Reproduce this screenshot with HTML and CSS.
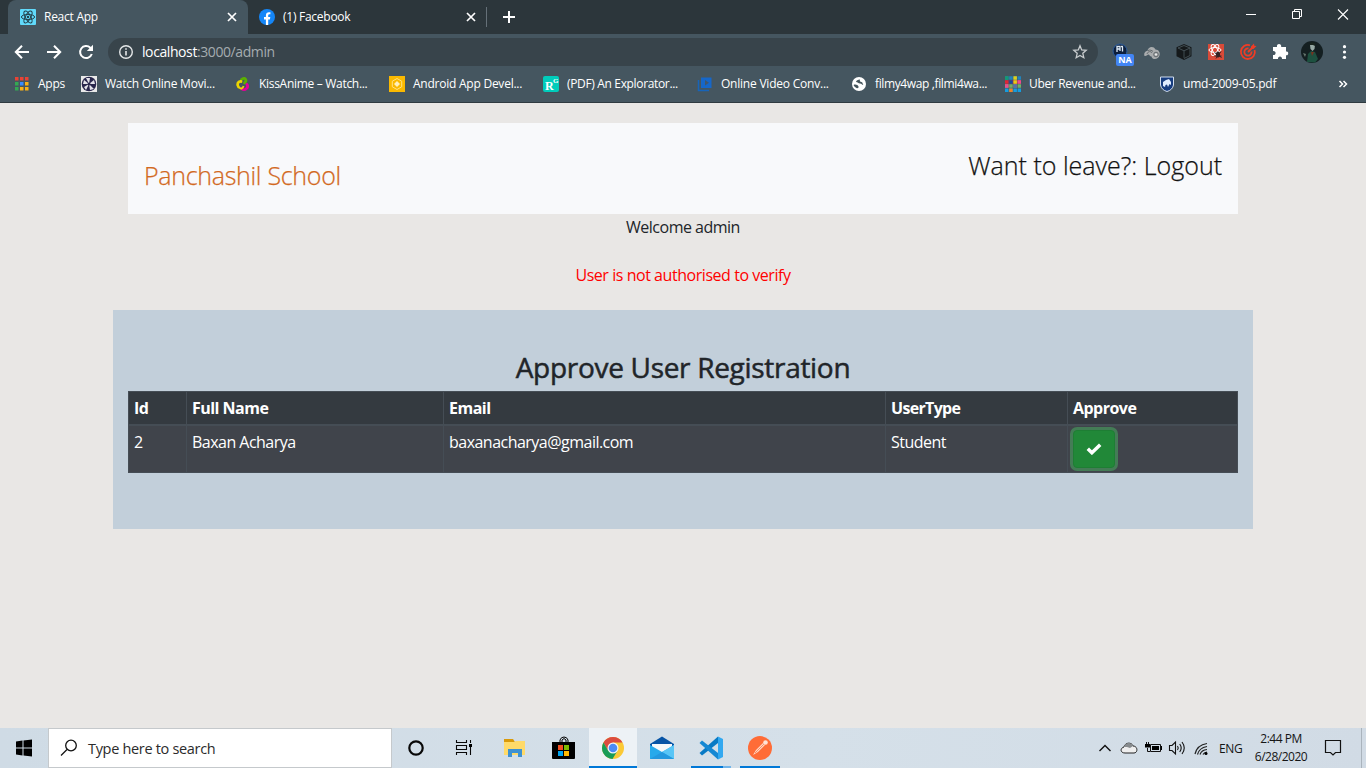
FILE: index.html
```html
<!DOCTYPE html>
<html lang="en">
<head>
<meta charset="utf-8">
<title>React App</title>
<link rel="stylesheet" href="styles.css">
</head>
<body>
<div class="screen">
  <header class="tabstrip">
    <div class="tab active">
      <svg class="i16" viewBox="0 0 16 16"><rect width="16" height="16" rx="1" fill="#61dafb"/><g fill="none" stroke="#24404b"><ellipse cx="8" cy="8" rx="6.6" ry="2.6"/><ellipse cx="8" cy="8" rx="6.6" ry="2.6" transform="rotate(60 8 8)"/><ellipse cx="8" cy="8" rx="6.6" ry="2.6" transform="rotate(120 8 8)"/></g><circle cx="8" cy="8" r="1.2" fill="#24404b"/></svg>
      <span class="tab-title t-react">React App</span>
      <svg class="close" viewBox="0 0 10 10"><path d="M1 1l8 8M9 1L1 9" stroke="#fff" stroke-width="1.7"/></svg>
    </div>
    <div class="tab second">
      <svg class="i16" viewBox="0 0 16 16"><circle cx="8" cy="8" r="8" fill="#1486f8"/><path d="M6.9 16v-5.6H5V8h1.9V6.4c0-2.1 1.2-3.2 3-3.2l1.5.1v2h-.9c-1 0-1.3.6-1.3 1.2V8h2.1l-.4 2.4H9.2V16z" fill="#fff"/></svg>
      <span class="tab-title t-fb">(1) Facebook</span>
      <svg class="close" viewBox="0 0 10 10"><path d="M1 1l8 8M9 1L1 9" stroke="#fff" stroke-width="1.7"/></svg>
    </div>
    <svg class="plus" viewBox="0 0 12 12"><path d="M6 0v12M0 6h12" stroke="#fff" stroke-width="2"/></svg>
    <div class="window-controls">
      <svg viewBox="0 0 46 28"><path d="M18 14.5h10" stroke="#fff"/></svg>
      <svg viewBox="0 0 46 28"><path d="M18.5 11.5h7v7h-7zM20.5 11.5v-2h7v7h-2" fill="none" stroke="#fff"/></svg>
      <svg viewBox="0 0 46 28"><path d="M18 9.5l10 10M28 9.5l-10 10" stroke="#fff" stroke-width="1.1"/></svg>
    </div>
  </header>

  <div class="toolbar">
    <svg class="nav" viewBox="0 0 16 16"><path d="M15 8H2M8 1.8L1.8 8 8 14.2" fill="none" stroke="#fff" stroke-width="2"/></svg>
    <svg class="nav" viewBox="0 0 16 16"><path d="M1 8h13M8 1.8L14.2 8 8 14.2" fill="none" stroke="#fff" stroke-width="2"/></svg>
    <svg class="nav" viewBox="0 0 16 16"><path d="M13.8 10A6 6 0 1 1 12.3 3.7L14 5.4" fill="none" stroke="#fff" stroke-width="2"/><path d="M15 .8V7H8.8z" fill="#fff"/></svg>
    <div class="omnibox">
      <svg class="i16" viewBox="0 0 16 16"><circle cx="8" cy="8" r="6.3" fill="none" stroke="#e4e7e8" stroke-width="1.4"/><path d="M8 7v4.5M8 4.2v1.6" stroke="#e4e7e8" stroke-width="1.6"/></svg>
      <span class="url"><b>localhost</b>:3000/admin</span>
      <svg class="star" viewBox="0 0 16 16"><path d="M8 1.800l1.700 4.100 4.500.4-3.400 3 1 4.400L8 11.400l-3.800 2.300 1-4.400-3.400-3 4.500-.4z" fill="none" stroke="#c9cdcf" stroke-width="1.3"/></svg>
    </div>
    <div class="extensions">
      <span class="ext na-ext">
        <svg class="i16" viewBox="0 0 16 16"><circle cx="8" cy="8" r="7" fill="#0d1f3c" stroke="#2b5c9c"/><path d="M5 9V3.500h3V8M5 6h3M10.500 3.500v5M9 3.500h2" fill="none" stroke="#dce9f5" stroke-width="1.300"/></svg>
        <span class="na">NA</span>
      </span>
      <svg class="ext" viewBox="0 0 32 32"><path d="M8.500 20c-1-3 1-5 3-5 0-4 6-6 8-1.500 3 0 5 3 4 6-1 4-7 5-8 1-2 0-2-2-3-2s-2 2-4 1.500z" fill="#a9acae"/><g fill="none" stroke="#62696d" stroke-width="1"><circle cx="20" cy="18.500" r="2.300"/><path d="M11 18c1-3 4-3 5-1M12 14.500c2-1 4 0 5 1"/></g><circle cx="20" cy="18.500" r="1" fill="#eee"/></svg>
      <svg class="ext" viewBox="0 0 32 32"><path d="M16 8l7.5 3.200v9L16 24l-7.500-3.800v-9z" fill="#15191b"/><path d="M10 12l6 2.800v7M22 12l-6 2.800M10 12l6-2.500 6 2.500v7.500l-6 3" fill="none" stroke="#4d5a61" stroke-width=".8"/></svg>
      <svg class="ext" viewBox="0 0 32 32"><path d="M8 8h16v16H8z" fill="#d94a38"/><g fill="none" stroke="#fff"><ellipse cx="15" cy="14" rx="6" ry="2.500"/><ellipse cx="15" cy="14" rx="6" ry="2.500" transform="rotate(60 15 14)"/><ellipse cx="15" cy="14" rx="6" ry="2.500" transform="rotate(120 15 14)"/></g><ellipse cx="18" cy="18.500" rx="2" ry="3" fill="#332022"/><path d="M14.500 16.500l7 5M21 15.500l-5 7M14.500 20h7" stroke="#332022"/></svg>
      <svg class="ext" viewBox="0 0 32 32"><g fill="none" stroke="#f03c24" stroke-width="1.800"><path d="M18 9.300A7 7 0 1 0 22.600 14"/><path d="M16.500 12.500a3.600 3.600 0 1 0 3 3M16 16l4.500-4.500"/></g><path d="M19 10.500L22 7.500l.3 2.200 2.200.3-3 2.900h-2.500z" fill="#f03c24"/></svg>
      <svg class="ext" viewBox="0 0 32 32"><path d="M9 11h4c-1-4 5-4 4.200 0H22v4.500c3-1 3 4.500 0 3.700V23h-4c.5-3.500-4.500-3.500-4 0H9v-4c3.500.5 3.500-4.500 0-4z" fill="#fff"/></svg>
      <svg class="ext" viewBox="0 0 32 32"><circle cx="16" cy="16" r="11" fill="#141f21"/><path d="M11 26l1-8 3-3 4 1 3 7-3 3.500z" fill="#1d5140"/><path d="M14 9l2-2 3 2-.5 4-2 2-2-2z" fill="#97a9a4"/><path d="M13 9l2-3 4 1v3l-2-1z" fill="#19241e"/><path d="M15 16l1 4 2-4z" fill="#78311f"/><path d="M7 17l3 1-1 3z" fill="#66776f"/></svg>
      <svg class="ext" viewBox="0 0 32 32"><g fill="#fff"><circle cx="16.500" cy="10.700" r="1.600"/><circle cx="16.500" cy="16" r="1.600"/><circle cx="16.500" cy="21.300" r="1.600"/></g></svg>
    </div>
  </div>

  <nav class="bookmarks">
    <div class="bm apps"><svg class="i16" viewBox="0 0 16 16"><path d="M1 1h3.500v3.500H1zM6 1h3.500v3.500H6zM11 1h3.500v3.500H11z" fill="#ea4335"/><path d="M1 6h3.500v3.500H1zM1 11h3.500v3.500H1z" fill="#34a853"/><path d="M6 6h3.500v3.500H6z" fill="#3b8cff"/><path d="M11 6h3.500v3.500H11zM6 11h3.500v3.500H6zM11 11h3.500v3.500H11z" fill="#fbb116"/></svg><span class="b0">Apps</span></div>
    <div class="bm"><svg class="i16" viewBox="0 0 16 16"><path d="M0 0h16v16H0z" fill="#e9e9e9"/><circle cx="8" cy="8" r="7.300" fill="#28264c"/><path d="M8 8L5 2h4zM8 8l5-4 1 4zM8 8l5 5-4 1zM8 8l-3 6-2-3zM8 8L2 8l1-4z" fill="#e3e3ea"/><circle cx="8" cy="8" r="1.500" fill="#28264c"/></svg><span class="b1">Watch Online Movi...</span></div>
    <div class="bm"><svg class="i16" viewBox="0 0 16 16"><g fill="none" stroke-width="2.800" stroke-linecap="round"><path d="M6.500 3.500C10 .5 12.500 4 9.500 7" stroke="#5bb000"/><path d="M6 5.500C3 5 1.500 8.500 3.500 11" stroke="#ecd500"/><path d="M12 8.500c2 3-2 7-5.500 4" stroke="#e30098"/></g><path d="M4 11c2 3 4 1 4.500-1" fill="none" stroke="#ecd500" stroke-width="1.800"/></svg><span class="b2">KissAnime – Watch...</span></div>
    <div class="bm"><svg class="i16" viewBox="0 0 16 16"><path d="M0 0h16v16H0z" fill="#fab900"/><path d="M8 2.500l4.700 2.700v5.600L8 13.500l-4.700-2.700V5.200z" fill="none" stroke="#ffe182"/><path d="M8 5l3 3-3 3-3-3z" fill="#fff0ba"/></svg><span class="b3">Android App Devel...</span></div>
    <div class="bm"><svg class="i16" viewBox="0 0 16 16"><rect width="16" height="16" rx="2" fill="#00ccbb"/><text x="2" y="14" class="rg">R</text><text x="10" y="7" class="rg-s">G</text></svg><span class="b4">(PDF) An Explorator...</span></div>
    <div class="bm"><svg class="i16" viewBox="0 0 16 16"><path d="M4 1.500h10.500v10.500H4z" fill="#1667c9"/><path d="M1.500 4v10.500H12" fill="none" stroke="#1764b9" stroke-width="1.500"/><path d="M8 4l4 2.700-4 2.800z" fill="#42566a"/></svg><span class="b5">Online Video Conv...</span></div>
    <div class="bm"><svg class="i16" viewBox="0 0 16 16"><circle cx="8" cy="8" r="7" fill="#fff"/><path d="M9 3.500c-2 0-4 1-4 2.500 2 0 2 1.500 4 1.500s2 2 3.500 1.500c-1 0-.5-3-2-3S8.500 5 9 3.500zM2.500 9c2-1 4.500 0 5 1.500s-1 2-2 1.500-2-1-3-3z" fill="#44545b"/></svg><span class="b6">filmy4wap ,filmi4wa...</span></div>
    <div class="bm"><svg class="i16" viewBox="0 0 16 16"><g stroke-width="3.500"><path d="M0 2h16" stroke="#2184bd" stroke-dasharray="3.500 .700"/><path d="M0 6h16" stroke="#e22435" stroke-dasharray="3.500 .700"/><path d="M0 10h16" stroke="#72ae68" stroke-dasharray="3.500 .700"/><path d="M0 14.200h16" stroke="#149de0" stroke-dasharray="3.500 .700"/></g><path d="M0 .3h3.500v3.500H0z" fill="#159a72"/><path d="M4.200 4.300h3.500v3.500H4.200z" fill="#154ca1"/><path d="M8.400 4.300h3.500v3.500H8.400zM8.400.3h3.500v3.500H8.400z" fill="#e2cf16"/><path d="M12.500 4.300H16v3.500h-3.500zM0 8.300h3.500v3.500H0z" fill="#e94c91"/><path d="M4.200 12.500h3.500V16H4.200z" fill="#f08125"/><path d="M8.400 8.300h3.500v3.500H8.400z" fill="#5d69ab"/></svg><span class="b7">Uber Revenue and...</span></div>
    <div class="bm"><svg class="i16" viewBox="0 0 16 16"><path d="M1.500 1h13v8q-1 5-6.500 6.500Q2.500 14 1.500 9z" fill="#173d80" stroke="#d0dced"/><path d="M4 10V6l3-2 3-1 2 3v3l-1.500-1-1.500 3-1-2.500-1.500.500L6 11z" fill="#dfecff"/></svg><span class="b8">umd-2009-05.pdf</span></div>
    <svg class="more" viewBox="0 0 10 10"><path d="M1.500 2l3 3-3 3M5.500 2l3 3-3 3" fill="none" stroke="#fff" stroke-width="1.500"/></svg>
  </nav>

  <main class="page">
    <div class="navbar"><span class="brand">Panchashil School</span><span class="logout">Want to leave?: Logout</span></div>
    <p class="welcome">Welcome admin</p>
    <p class="error">User is not authorised to verify</p>
    <section class="panel">
      <h3>Approve User Registration</h3>
      <table>
        <colgroup><col class="c1"><col class="c2"><col class="c3"><col class="c4"><col class="c5"></colgroup>
        <thead><tr><th>Id</th><th>Full Name</th><th>Email</th><th class="type">UserType</th><th>Approve</th></tr></thead>
        <tbody><tr><td>2</td><td>Baxan Acharya</td><td>baxanacharya@gmail.com</td><td>Student</td><td><button class="approve" aria-label="Approve"><svg viewBox="0 0 16 12"><path d="M1.800 5.700l4.100 4L14.200 1.800" fill="none" stroke="#fff" stroke-width="3.500"/></svg></button></td></tr></tbody>
      </table>
    </section>
  </main>

  <footer class="taskbar">
    <div class="cell"><svg viewBox="0 0 48 40"><path d="M16 13.500l6.500-1v7H16zM23.500 12.400L32 11.400v8.100h-8.500zM16 20.500h6.500v7L16 26.500zM23.500 20.500H32v8.100l-8.500-1z"/></svg></div>
    <div class="search"><svg viewBox="0 0 18 18"><circle cx="11" cy="6.500" r="5.300" fill="none" stroke="#111" stroke-width="1.300"/><path d="M7 10.500L1 16.500" stroke="#111" stroke-width="1.300"/></svg><span>Type here to search</span></div>
    <div class="cell"><svg viewBox="0 0 48 40"><circle cx="24" cy="20" r="6.700" fill="none" stroke="#080808" stroke-width="2.200"/></svg></div>
    <div class="cell"><svg viewBox="0 0 48 40"><path d="M16.500 12v2.500h10V12M16.500 27v-2.500h10V27M16.500 17.500h10v4h-10zM30.500 12v3M30.500 19v8" fill="none" stroke="#080808" stroke-width="1.100"/><path d="M29 16h3v3h-3z"/></svg></div>
    <div class="apps-running">
      <div class="cell"><svg viewBox="0 0 48 40"><path d="M13 11h9l2 3H13z" fill="#d99a0b"/><path d="M13 14h10l2-1h9v14H13z" fill="#ffda69"/><path d="M17 29v-8h14v8h-4v-4h-6v4z" fill="#3e91d1"/></svg></div>
      <div class="cell"><svg viewBox="0 0 48 40"><path d="M20 14v-2q1-3 4-3t4 3v2M22 14v-2q2-3 4 0v2" fill="none" stroke="#000"/><path d="M12 14h23v16q0 1-1 1H13q-1 0-1-1z"/><path d="M18 17h5v5h-5z" fill="#f25022"/><path d="M24 17h5v5h-5z" fill="#7fba00"/><path d="M18 23h5v5h-5z" fill="#00a4ef"/><path d="M24 23h5v5h-5z" fill="#ffb900"/></svg></div>
      <div class="cell current"><svg viewBox="0 0 48 40"><circle cx="24" cy="20" r="11" fill="#fbc936"/><path d="M14.470 14.500a11 11 0 0 1 19.060 0H24l-4.800 8.200z" fill="#dc4c3f"/><path d="M14.470 14.500A11 11 0 0 0 23.500 31l5-8.300-9.300.1z" fill="#189c57"/><circle cx="24" cy="20" r="5.500" fill="#f2f5f6"/><circle cx="24" cy="20" r="4.300" fill="#4b8bf4"/></svg></div>
      <div class="cell"><svg viewBox="0 0 48 40"><path d="M12 16l12-7.500L36 16v5H12z" fill="#0754a6"/><path d="M14 16h20v5L24 27l-10-6z" fill="#f5f8fa"/><path d="M12 17l12 7 12-7v14H12z" fill="#27a9eb"/><path d="M24 24l12-7v14z" fill="#58c5f6"/><path d="M24 24l12 7H12z" fill="#2398df"/></svg></div>
      <div class="cell"><svg viewBox="0 0 48 40"><path d="M31 8.500L12.500 25l2.500 2.500L31 15z" fill="#087ac5"/><path d="M12.500 15l2.500-2.500L31 25v6.500z" fill="#1588d3"/><path d="M31 8.500l5 2.500v18l-5 2.500z" fill="#32a8f0"/><path d="M4 38h32v2H4z" fill="#0078d7"/><path d="M36 38h8v2h-8z" fill="#72b5ea"/></svg></div>
      <div class="cell"><svg viewBox="0 0 48 40"><circle cx="24" cy="20" r="12" fill="#ff6c37"/><path d="M17 27l3-5 7-7 2 2-7 7z" fill="#ffd7c6"/><path d="M19 25l9-9" stroke="#ff6c37" stroke-width=".7"/><circle cx="29.500" cy="14.500" r="2.300" fill="#ffe3d7"/><path d="M4 38h40v2H4z" fill="#0078d7"/></svg></div>
    </div>
    <div class="tray">
      <svg viewBox="0 0 24 24"><path d="M6.500 15l5.500-5.500 5.500 5.500" fill="none" stroke="#111" stroke-width="1.400"/></svg>
      <svg viewBox="0 0 24 24"><path d="M8 17c-5 0-5-5-1-6 1-5 8-5 9-1 5 0 5 7 1 7z" fill="#eee" stroke="#222"/><path d="M7 11c1-5 8-5 9-1l-3 2-3-1z" fill="#878b8e"/></svg>
      <svg viewBox="0 0 24 24"><path d="M9.500 8.500h10v7h-10z" fill="none" stroke="#111"/><path d="M11 10h7v4h-7zM20 10h1v4h-1zM4 8h5v3.500H4z"/><path d="M5.500 6v2M7.500 6v2M6.500 12v3.500H9" fill="none" stroke="#111"/></svg>
      <svg viewBox="0 0 24 24"><path d="M4.500 9.500H7L10.500 6v12L7 14.500H4.500z" fill="none" stroke="#111" stroke-width="1.100"/><path d="M12.500 10q1.500 2 0 4M14.700 8q3 4 0 8M17 6q4.500 6 0 12" fill="none" stroke="#111" stroke-width="1.100"/></svg>
      <svg viewBox="0 0 24 24"><g fill="none" stroke="#222" stroke-width="1.200"><path d="M6 18Q8 9 18 7.500M8.500 18.500Q10 12 18 10.500M11 18.500Q12.500 14 18 13.500M14 18.500Q15 16.500 18 16"/></g><circle cx="17" cy="17.500" r="1.500"/></svg>
      <span class="lang">ENG</span>
      <div class="clock"><span class="time">2:44 PM</span><span class="date">6/28/2020</span></div>
      <svg class="notice" viewBox="0 0 20 20"><path d="M2.500 2.500h15v12h-5l-2.500 2.500-2.500-2.500h-5z" fill="none" stroke="#111" stroke-width="1.200"/></svg>
    </div>
  </footer>
</div>
</body>
</html>
```
FILE: styles.css
```css
* { box-sizing: border-box; }
body { margin: 0; overflow: hidden; font-family: "Open Sans", "Noto Sans", sans-serif; }
svg { display: block; flex: none; }
.screen { width: 1366px; height: 768px; display: flex; flex-direction: column; background: #e9e7e5; }
.i16 { width: 16px; height: 16px; }

.tabstrip { height: 34px; flex: none; display: flex; background: #2c363b; color: #fff; }
.tab { height: 34px; display: flex; align-items: center; font-size: 12px; letter-spacing: -.26px; white-space: nowrap; }
.tab.active { margin-left: 8px; width: 240px; padding: 0 11px 0 12px; background: #455660; border-radius: 8px 8px 0 0; }
.tab.second { width: 239px; padding: 0 10px 0 11px; border-right: 1px solid #657078; height: 20px; margin-top: 7px; }
.tab-title { margin-left: 8px; flex: 1; line-height: 16px; padding-bottom: 1px; }
.close { width: 10px; height: 10px; }
.plus { width: 12px; height: 12px; margin: 11px 0 0 16px; }
.window-controls { display: flex; margin-left: auto; }
.window-controls svg { width: 46px; height: 28px; }

.toolbar { height: 36px; flex: none; display: flex; align-items: center; background: #455660; padding-left: 14px; }
.nav { width: 16px; height: 16px; margin-right: 16px; }
.omnibox { width: 990px; height: 28px; margin-left: -2px; border-radius: 14px; background: #38444b; display: flex; align-items: center; padding: 0 10px; }
.url { color: #a5acb0; font-size: 14px; margin-left: 8px; line-height: 20px; letter-spacing: -.41px; }
.url b { color: #fff; font-weight: 400; }
.star { width: 16px; height: 16px; margin-left: auto; }
.extensions { display: flex; margin-left: 6px; }
.ext { width: 32px; height: 32px; }
.na-ext { position: relative; padding: 7px 8px; }
.na { position: absolute; left: 12px; top: 18px; width: 18px; height: 12px; border-radius: 2px; background: #4285f4; color: #fff; font: bold 9px/12px "Open Sans", sans-serif; text-align: center; }

.bookmarks { height: 33px; flex: none; background: #455660; border-bottom: 1px solid #2f3a40; display: flex; align-items: center; padding: 0 0 4px 14px; color: #fff; font-size: 12px; }
.bm { width: 154px; display: flex; gap: 8px; align-items: center; white-space: nowrap; flex: none; }
.bm.apps { width: 67px; }
.bm span { line-height: 16px; padding-bottom: 1px; }
.b0, .b1, .b3 { letter-spacing: -.24px; }
.b2 { letter-spacing: -.3px; }
.b4, .b7 { letter-spacing: -.34px; }
.b5, .b8 { letter-spacing: -.22px; }
.b6 { letter-spacing: -.37px; }
.more { width: 10px; height: 10px; margin-left: 25px; }
.rg { font: bold 12px "Liberation Serif", serif; fill: #fff; }
.rg-s { font: bold 7px "Liberation Serif", serif; fill: #fff; }

.page { height: 625px; flex: none; padding-top: 20px; color: #212529; font-size: 16px; line-height: 24px; }
.navbar { width: 1110px; height: 91px; margin: 0 auto; padding: 0 16px; background: #f8f9fb; display: flex; justify-content: space-between; white-space: nowrap; font-size: 25px; line-height: 36px; font-weight: 300; -webkit-text-stroke: .25px currentColor; }
.brand { padding-top: 34px; color: #d2691e; letter-spacing: -.3px; }
.logout { padding-top: 24px; color: #111; letter-spacing: 0; }
.welcome { margin: 0; padding-top: 1px; text-align: center; letter-spacing: -.5px; }
.error { margin: 24px 0 23px; text-align: center; color: #f00; letter-spacing: -.45px; }
.panel { width: 1140px; height: 219px; margin: 0 auto; padding: 41px 15px 0; background: #c2cfda; }
h3 { margin: 0 0 7px; font-size: 28px; line-height: 33px; font-weight: 400; -webkit-text-stroke: .5px currentColor; text-align: center; letter-spacing: -.3px; }
table { width: 1110px; table-layout: fixed; border-collapse: separate; border-spacing: 0; color: #fff; background: #343a40; border: solid #454d55; border-width: 1px 0 0 1px; letter-spacing: -.52px; }
.c1 { width: 58px; } .c2 { width: 257px; } .c3 { width: 442px; } .c4 { width: 182px; } .c5 { width: 170px; }
th, td { padding: 4px 5px; text-align: left; vertical-align: top; border-right: 1px solid #454d55; border-bottom: 1px solid #454d55; white-space: nowrap; line-height: 24px; }
th { height: 34px; border-bottom-width: 2px; font-weight: 700; }
.type { letter-spacing: -.68px; }
td { height: 47px; background: #40444b; }
.approve { display: block; width: 42px; height: 38px; border: 1px solid #1e7e34; border-radius: 4px; background: #218838; box-shadow: 0 0 0 3px rgba(72, 180, 97, .5); padding: 0 0 0 12px; }
.approve svg { width: 16px; height: 12px; }

.taskbar { height: 40px; flex: none; display: flex; background: linear-gradient(90deg, #cfdbe5, #d5e0e9 60%, #d1dbe5); }
.cell { width: 48px; height: 40px; flex: none; }
.cell svg { width: 48px; height: 40px; }
.search { width: 344px; height: 40px; flex: none; background: #fff; border: 1px solid #c5c9cc; display: flex; align-items: center; font-size: 14.500px; letter-spacing: -.32px; color: #2b2b2b; padding-left: 11px; gap: 10px; }
.search svg { width: 18px; height: 18px; }
.apps-running { display: flex; gap: 1px; margin-left: 3px; }
.current { background: #edf2f6; border-bottom: 2px solid #0078d7; overflow: hidden; }
.tray { margin-left: auto; margin-right: 4px; padding-right: 18px; border-right: 1px solid #aab4bd; display: flex; align-items: center; color: #151515; font-size: 12px; }
.tray > svg { width: 24px; height: 24px; }
.lang { width: 24px; margin-left: 6px; white-space: nowrap; letter-spacing: -.4px; }
.clock { width: 62px; margin-left: 7px; display: flex; flex-direction: column; align-items: center; line-height: 18px; white-space: nowrap; letter-spacing: -.5px; }
.tray .notice { width: 20px; height: 20px; margin-left: 11px; }
```
